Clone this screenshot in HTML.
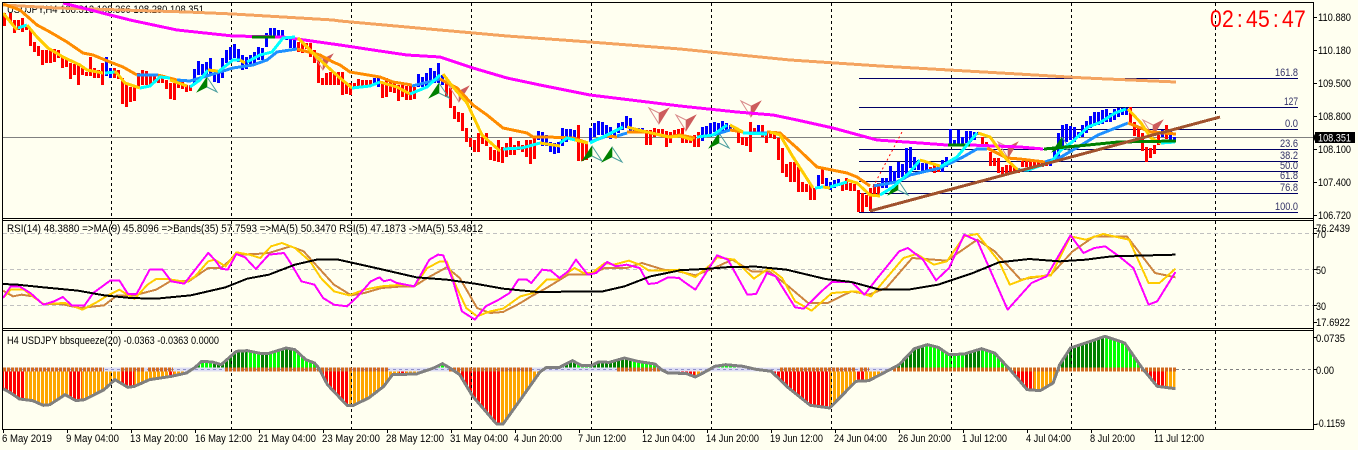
<!DOCTYPE html>
<html>
<head>
<meta charset="utf-8">
<title>USDJPY,H4</title>
<style>
html,body{margin:0;padding:0;background:#FFFFF0;width:1358px;height:450px;overflow:hidden}
svg{display:block}
text{font-family:"Liberation Sans",sans-serif;font-size:11px;fill:#000}
.r,.b{fill:none;stroke-width:3;shape-rendering:crispEdges}
.r{stroke:#F00}.b{stroke:#00F}
.l{fill:none;stroke-width:3;stroke-linejoin:round;stroke-linecap:butt;shape-rendering:crispEdges}
.y{stroke:#FC0}.c{stroke:#0FF}.o{stroke:#FF8C00}.d{stroke:#1E90FF}
.t{fill:none;stroke-width:2;stroke-linejoin:round;vector-effect:non-scaling-stroke;shape-rendering:crispEdges}
.f{fill:#336}
</style>
</head>
<body>
<svg width="1358" height="450" viewBox="0 0 1358 450" xmlns="http://www.w3.org/2000/svg">
<defs>
<clipPath id="h1"><polygon points="7,182 25,195 45,213 75,218 100,232 115,230 150,200 175,218 195,215 240,185 265,155 295,178 310,175 345,155 395,145 430,135 450,118 465,100 490,102 510,110 545,70 570,68 600,76 620,76 660,60 680,65 705,95 725,105 735,120 755,170 800,232 815,232 850,210 885,175 905,140 960,138 1000,120 1020,107 1035,118 1060,140 1090,205 1145,288 1160,288 1200,215 1245,132 1260,118 1290,118 1320,98 1340,112 1365,112 1380,102 1405,103 1440,90 1470,100 1510,108 1525,125 1540,135 1568,135 1568,124 7,124"/></clipPath>
<clipPath id="h2"><polygon points="0,137 20,137 40,147 65,130 85,115 110,110 150,115 180,124 215,130 255,180 305,232 350,240 410,160 440,158 490,124 510,110 545,62 575,50 600,58 625,80 660,78 700,62 730,75 765,124 805,185 835,188 865,165 880,110 905,60 985,25 1030,45 1070,120 1105,175 1147,182 1147,124 0,124"/></clipPath>
<g id="ga"><path d="M0 0-10 15 0 10Z" fill="#008000" stroke="#008000" stroke-width=".6"/><path d="M0 0 10 15 0 10" fill="none" stroke="#4A9E9E" stroke-width="1"/></g>
<g id="sa"><path d="M0 0 10-16 0-11Z" fill="#CD5C5C" stroke="#CD5C5C" stroke-width=".6"/><path d="M0 0-10-16 0-11" fill="none" stroke="#D98A8A" stroke-width="1"/></g>
</defs>

<rect width="1358" height="450" fill="#FFFFF0"/>

<!-- title -->
<text x="7" y="13" textLength="197" lengthAdjust="spacingAndGlyphs">USDJPY,H4  108.313 108.366 108.280 108.351</text>

<!-- vertical grid -->
<path d="M111.5 3V218M231.5 3V218M351.5 3V218M471.5 3V218M591.5 3V218M711.5 3V218M831.5 3V218M951.5 3V218M1071.5 3V218M1215.5 3V218M111.5 221V328M231.5 221V328M351.5 221V328M471.5 221V328M591.5 221V328M711.5 221V328M831.5 221V328M951.5 221V328M1071.5 221V328M1215.5 221V328" stroke="#000" stroke-width="1" stroke-dasharray="3 3" fill="none"/>

<!-- bid line -->
<path d="M3 137.5H1313" stroke="#808080" stroke-width="1"/>

<!-- fib levels -->
<path d="M859 78.5H1298M859 107.5H1298M859 129.5H1298M859 149.5H1298M859 161.5H1298M859 171.5H1298M859 181.5H1298M859 193.5H1298M859 212.5H1298" stroke="#000066" stroke-width="1"/>
<g font-size="10">
<text class="f" x="1275" y="76" textLength="23" lengthAdjust="spacingAndGlyphs">161.8</text>
<text class="f" x="1284" y="105" textLength="14" lengthAdjust="spacingAndGlyphs">127</text>
<text class="f" x="1285" y="127" textLength="13" lengthAdjust="spacingAndGlyphs">0.0</text>
<text class="f" x="1280" y="147" textLength="18" lengthAdjust="spacingAndGlyphs">23.6</text>
<text class="f" x="1280" y="159" textLength="18" lengthAdjust="spacingAndGlyphs">38.2</text>
<text class="f" x="1280" y="169" textLength="18" lengthAdjust="spacingAndGlyphs">50.0</text>
<text class="f" x="1280" y="179" textLength="18" lengthAdjust="spacingAndGlyphs">61.8</text>
<text class="f" x="1280" y="191" textLength="18" lengthAdjust="spacingAndGlyphs">76.8</text>
<text class="f" x="1275" y="210" textLength="23" lengthAdjust="spacingAndGlyphs">100.0</text>
</g>

<!-- bars -->
<path class="r" d="M4.5 13V26M10.5 13V22M14.5 20V33M18.5 20V30M22.5 18V32M26.5 25V30M30.5 30V46M34.5 42V52M38.5 46V56M42.5 50V65M46.5 50V63M50.5 50V63M54.5 49V62M58.5 50V58M62.5 57V68M66.5 58V67M70.5 63V79M74.5 64V75M78.5 65V85M82.5 68V75M86.5 72V76M90.5 57V76M94.5 68V78M98.5 70V78M102.5 63V85"/>
<path class="b" d="M106.5 57V76M110.5 68V78"/>
<path class="r" d="M114.5 68V78M118.5 70V79M122.5 78V104M126.5 83V107M130.5 87V102M134.5 87V101M138.5 73V87M142.5 70V85M146.5 71V85M150.5 75V85M154.5 76V83M158.5 78V83M162.5 75V83M166.5 80V89M170.5 83V99M174.5 83V100M178.5 80V88M182.5 82V89M186.5 85V92M190.5 85V91"/>
<path class="b" d="M194.5 69V85M198.5 61V75M202.5 64V75M206.5 62V75M210.5 58V75M214.5 73V82M218.5 70V83M222.5 58V78M226.5 50V63M230.5 47V60M234.5 44V58M238.5 49V62M242.5 55V70M246.5 57V69M250.5 55V65M254.5 52V65M258.5 47V60M262.5 48V60M266.5 33V47M270.5 28V37M274.5 28V37M278.5 30V37M282.5 30V38M286.5 37V40M290.5 38V48M294.5 38V48"/>
<path class="r" d="M298.5 42V52M302.5 42V53M306.5 43V49M310.5 43V57M314.5 50V63M318.5 60V83M322.5 78V85M326.5 73V85M330.5 72V85M334.5 73V85M338.5 72V85M342.5 72V95M346.5 83V94M350.5 83V95M354.5 83V87M358.5 79V87M362.5 80V87M366.5 80V87M370.5 80V85"/>
<path class="b" d="M374.5 78V84M378.5 78V87"/>
<path class="r" d="M382.5 82V98M386.5 78V97M390.5 82V92M394.5 83V93M398.5 85V101M402.5 85V97M406.5 86V100M410.5 85V100M414.5 87V99"/>
<path class="b" d="M418.5 74V87M422.5 77V87M426.5 73V87M430.5 68V83M434.5 71V83M438.5 63V83M442.5 75V85"/>
<path class="r" d="M446.5 83V97M450.5 88V108M454.5 106V119M458.5 112V122M462.5 113V131M466.5 128V142M470.5 138V147M474.5 140V152M478.5 133V152M482.5 137V144M486.5 133V146M490.5 147V160M494.5 150V161M498.5 140V162M502.5 147V163M506.5 143V157M510.5 137V155M514.5 145V155M518.5 141V150M522.5 145V152M526.5 140V157M530.5 140V164M534.5 138V159"/>
<path class="b" d="M538.5 131V140M542.5 132V146M546.5 135V146M550.5 142V152M554.5 143V154M558.5 142V153M562.5 128V146M566.5 129V142M570.5 129V140M574.5 130V140"/>
<path class="r" d="M578.5 125V161M582.5 140V161M586.5 143V160"/>
<path class="b" d="M590.5 128V142M594.5 123V137M598.5 121V135M602.5 122V135M606.5 125V134M610.5 127V139M614.5 130V138M618.5 123V133M622.5 122V130M626.5 116V128M630.5 118V132M634.5 128V132M638.5 128V132M642.5 128V132"/>
<path class="r" d="M646.5 130V145M650.5 130V145M654.5 128V137M658.5 129V135M662.5 129V135M666.5 131V147M670.5 132V143M674.5 130V137M678.5 129V135M682.5 128V143M686.5 135V143M690.5 136V143M694.5 135V147M698.5 132V147"/>
<path class="b" d="M702.5 127V141M706.5 126V137M710.5 123V135M714.5 122V132M718.5 123V135M722.5 121V133M726.5 123V132M730.5 125V131M734.5 128V132"/>
<path class="r" d="M738.5 132V143M742.5 137V145M746.5 137V146M750.5 122V152M754.5 128V135"/>
<path class="b" d="M758.5 125V135"/>
<path class="r" d="M762.5 125V137M766.5 132V143M770.5 132V138M774.5 133V139M778.5 138V160M782.5 148V173M786.5 164V177M790.5 162V182M794.5 162V182M798.5 167V192M802.5 182V192M806.5 184V192M810.5 185V200M814.5 188V200"/>
<path class="b" d="M818.5 175V188"/>
<path class="r" d="M822.5 169V184"/>
<path class="b" d="M826.5 178V188M830.5 182V190M834.5 180V188M838.5 179V186"/>
<path class="r" d="M842.5 182V191M846.5 178V190M850.5 183V191M854.5 184V191M858.5 190V212M862.5 193V212M866.5 195V207M870.5 188V211M874.5 184V197M878.5 183V195"/>
<path class="b" d="M882.5 178V188M886.5 178V188M890.5 166V182M894.5 171V182M898.5 162V178M902.5 164V177M906.5 148V175M910.5 147V168M914.5 157V170M918.5 160V170M922.5 163V171M926.5 163V170"/>
<path class="r" d="M930.5 167V172M934.5 165V173M938.5 165V172"/>
<path class="b" d="M942.5 160V172M946.5 157V167M950.5 129V144M954.5 140V144M958.5 130V145M962.5 137V145M966.5 131V143M970.5 131V142M974.5 132V140M978.5 132V135"/>
<path class="r" d="M982.5 137V144M986.5 142V147M990.5 152V166M994.5 158V166M998.5 158V173M1002.5 167V175M1006.5 165V173M1010.5 165V172M1014.5 167V172M1018.5 168V173M1022.5 161V167M1026.5 161V167M1030.5 161V167M1034.5 161V167M1038.5 161V167M1042.5 161V167M1046.5 161V166"/>
<path class="b" d="M1050.5 161V166M1054.5 150V162M1058.5 133V159M1062.5 125V147M1066.5 124V142M1070.5 126V140M1074.5 127V142M1078.5 132V138M1082.5 125V137M1086.5 121V133M1090.5 116V128M1094.5 112V126M1098.5 112V125M1102.5 110V124M1106.5 109V122M1110.5 113V122M1114.5 109V120M1118.5 108V117M1122.5 108V115M1126.5 108V115"/>
<path class="r" d="M1130.5 107V123M1134.5 122V136M1138.5 127V137M1142.5 133V151M1146.5 147V162M1150.5 148V158M1154.5 145V154M1158.5 135V145"/>
<path class="b" d="M1162.5 130V137"/>
<path class="r" d="M1166.5 125V139"/>
<path class="b" d="M1170.5 130V140M1174.5 137V142"/>

<!-- arrows -->
<use href="#ga" x="207" y="77"/>
<use href="#ga" x="439" y="83"/>
<use href="#ga" x="592" y="146"/>
<use href="#ga" x="612" y="147"/>
<use href="#ga" x="719" y="133"/>
<use href="#ga" x="898" y="180"/>
<use href="#ga" x="1062" y="137"/>
<use href="#sa" x="323" y="70"/>
<use href="#sa" x="459" y="102"/>
<use href="#sa" x="659" y="124"/>
<use href="#sa" x="686" y="131"/>
<use href="#sa" x="751" y="117"/>
<use href="#sa" x="1008" y="158"/>
<use href="#sa" x="1153" y="136"/>

<!-- long MAs -->
<path class="l" stroke="#F4A460" d="M3 5 57 8 187 12 233 14 333 20 340 21 440 30 507 36 590 42 680 49 790 60 880 66 1018 74 1085 78 1176 82"/>
<path class="l" stroke="#F0F" d="M63 3 130 20 177 30 233 36 283 37 340 45 373 50 407 55 440 57 473 68 507 78 540 85 590 95 680 106 737 112 773 115 797 120 833 128 877 140 920 143 947 145 970 145 1020 147 1043 149"/>
<path class="l" stroke="#008000" d="M252 37H275M948 145H970"/>

<!-- slow MA -->
<path class="l o" d="M3 4 20 10 37 25 50 32 67 42 83 53 93 55 110 62 123 67 137 75"/>
<path class="l d" d="M137 75 158 75"/>
<path class="l o" d="M158 75 177 80"/>
<path class="l d" d="M177 80 190 81 200 78 233 68 253 65 267 60 277 52 297 49"/>
<path class="l o" d="M297 49 320 55 333 62 340 65 350 72 380 77 393 82 412 85"/>
<path class="l d" d="M412 86 440 79"/>
<path class="l o" d="M440 79 457 88 473 105 487 115 503 128 527 133 533 137 547 137 573 138 588 143"/>
<path class="l d" d="M590 142 607 136"/>
<path class="l o" d="M607 136 617 137"/>
<path class="l d" d="M617 136 627 133"/>
<path class="l o" d="M627 132 647 132 668 137 680 135 695 138"/>
<path class="l d" d="M697 137 713 135 730 130"/>
<path class="l o" d="M730 130 743 132"/>
<path class="l d" d="M743 133 767 133"/>
<path class="l o" d="M767 132 780 133 797 148 817 167 847 173 857 177 870 186"/>
<path class="l d" d="M873 186 897 182 910 175 940 168 963 157 977 149 987 149"/>
<path class="l o" d="M987 148 1007 158 1020 159 1045 162"/>
<path class="l d" d="M1045 162 1061 157 1078 147 1098 135 1128 123"/>
<path class="l o" d="M1128 123 1151 132 1176 134"/>

<!-- fast MA -->
<path class="l y" d="M3 13 17 30"/>
<path class="l c" d="M18 28 27 25"/>
<path class="l y" d="M27 25 37 37 48 48 63 57 80 65 87 70 103 73"/>
<path class="l c" d="M105 73 115 72"/>
<path class="l y" d="M115 71 125 83 140 88"/>
<path class="l c" d="M140 88 150 86 160 77 170 78"/>
<path class="l y" d="M170 80 187 86"/>
<path class="l c" d="M190 87 200 80 208 70"/>
<path class="l y" d="M208 70 218 71"/>
<path class="l c" d="M218 72 233 60 240 60"/>
<path class="l y" d="M240 60 245 63"/>
<path class="l c" d="M247 62 260 55 272 52 283 38 295 37"/>
<path class="l y" d="M298 38 320 60 340 78 352 88"/>
<path class="l c" d="M352 88 370 86 380 82"/>
<path class="l y" d="M380 82 397 87 410 94"/>
<path class="l c" d="M410 94 427 87 440 75"/>
<path class="l y" d="M443 74 453 87 467 103 482 135 500 151"/>
<path class="l c" d="M503 149 522 148 540 143"/>
<path class="l y" d="M540 143 560 146"/>
<path class="l c" d="M560 143 567 138 575 140"/>
<path class="l y" d="M575 140 588 143"/>
<path class="l c" d="M590 143 607 135 623 127"/>
<path class="l y" d="M627 127 647 132 670 137 680 136 693 140"/>
<path class="l c" d="M697 137 713 135 727 125"/>
<path class="l y" d="M730 125 743 132"/>
<path class="l c" d="M743 133 767 134"/>
<path class="l y" d="M770 132 780 135 793 157 813 188"/>
<path class="l c" d="M815 188 823 187"/>
<path class="l y" d="M823 187 830 188"/>
<path class="l c" d="M830 187 847 182"/>
<path class="l y" d="M847 180 857 183 870 195 880 196"/>
<path class="l c" d="M880 195 893 187 910 172 920 160"/>
<path class="l y" d="M920 160 940 166"/>
<path class="l c" d="M940 167 957 157 977 133"/>
<path class="l y" d="M978 133 990 137 1007 160 1018 170"/>
<path class="l c" d="M1018 170 1028 170 1051 162 1061 150 1071 143 1088 127 1101 122 1115 113 1126 109"/>
<path class="l y" d="M1128 109 1141 123 1151 138 1161 143"/>
<path class="l c" d="M1161 143 1175 142"/>

<!-- dark green MA, trend lines -->
<path class="l" stroke="#008000" d="M1044 149 1088 145 1118 142 1176 141"/>
<path class="l" stroke="#A0522D" d="M870 211 1220 117"/>
<path d="M873 187 902 132" stroke="#F00" stroke-width="1" stroke-dasharray="2 3" fill="none"/>

<!-- clock -->
<text transform="translate(1210,27) scale(.88,1)" x="0 13.64 30.5 40.9 54.5 71.4 81.8 95.5" y="0" style="font-size:24px;fill:#F00">02:45:47</text>

<!-- RSI panel -->
<path d="M3 233.5H1313M3 269.5H1313M3 305.5H1313" stroke="#C0C0C0" stroke-width="1" stroke-dasharray="4 3" fill="none"/>
<text x="7" y="232" textLength="476" lengthAdjust="spacingAndGlyphs">RSI(14) 48.3880  =&gt;MA(9) 45.8096  =&gt;Bands(35) 57.7593  =&gt;MA(5) 50.3470  RSI(5) 47.1873  -&gt;MA(5) 53.4812</text>
<g transform="translate(0,218) scale(.4337,.3333)">
<path class="t" stroke="#CD853F" d="M7 218 30 235 50 230 75 235 100 258 140 258 185 270 240 262 270 232 310 232 360 215 395 188 435 190 480 150 510 150 545 110 590 108 620 105 670 85 700 100 735 150 770 200 810 232 840 225 880 210 930 205 955 205 985 180 1030 148 1060 180 1100 270 1130 285 1160 282 1200 255 1225 235 1260 210 1310 170 1360 170 1395 150 1445 150 1480 135 1530 155 1568 160"/>
<path class="t" stroke="#FC0" d="M7 240 25 215 55 215 75 235 100 258 150 255 190 275 220 255 245 235 275 215 310 243 340 200 360 183 385 183 430 192 450 175 480 130 495 125 520 145 545 103 575 110 600 120 625 85 650 75 680 90 715 130 740 180 770 220 805 232 840 215 880 205 930 200 955 205 985 150 1015 130 1030 130 1050 200 1075 270 1100 295 1130 280 1160 272 1200 235 1230 225 1260 185 1285 185 1325 150 1345 165 1365 165 1395 135 1415 140 1450 128 1475 140 1495 157 1530 158 1568 155"/>
<path class="t" stroke="#F0F" d="M7 240 25 205 45 205 70 225 100 260 125 250 145 237 165 262 195 262 215 225 255 187 275 187 295 228 315 228 345 155 375 155 395 190 425 197 465 130 480 105 495 125 510 152 525 155 545 108 565 118 590 153 620 110 655 105 670 135 695 190 725 200 745 240 770 260 800 265 825 235 855 190 875 178 885 190 900 185 915 195 955 205 990 125 1010 110 1022 112 1045 190 1065 280 1095 305 1120 265 1150 245 1175 225 1195 185 1215 185 1225 195 1250 155 1270 158 1290 180 1310 160 1328 125 1355 170 1375 165 1400 132 1420 145 1445 140 1475 150 1495 198 1515 195 1540 178 1568 180"/>
<path class="t" stroke="#000" d="M7 198 40 200 100 208 180 218 240 232 300 240 360 242 440 232 520 208 570 182 620 170 680 140 730 125 780 125 860 148 960 178 1030 185 1100 198 1160 212 1240 222 1390 220 1440 205 1500 175 1568 157"/>
</g>
<g transform="translate(678,218) scale(.4337,.3333)">
<path class="t" stroke="#CD853F" d="M0 160 40 172 80 152 125 125 170 160 210 160 250 200 300 255 345 255 400 220 440 230 480 210 540 120 590 125 620 128 690 65 730 100 790 185 860 170 910 100 960 55 1035 55 1100 165 1147 178"/>
<path class="t" stroke="#FC0" d="M0 157 40 177 80 135 90 118 130 125 175 182 210 150 240 180 270 250 308 278 355 225 410 220 445 235 520 120 550 108 590 140 620 130 660 55 690 48 740 130 765 200 810 178 860 172 905 55 940 65 980 48 1040 65 1085 195 1110 195 1147 152"/>
<path class="t" stroke="#F0F" d="M0 178 20 197 40 215 90 112 115 125 160 230 180 228 205 165 225 175 270 268 290 272 335 215 355 192 400 192 430 230 460 180 510 100 530 90 565 125 595 187 625 150 660 50 690 68 760 275 815 195 850 175 905 52 935 105 960 90 985 85 1020 118 1050 150 1085 260 1105 250 1147 162"/>
<path class="t" stroke="#000" d="M0 157 60 153 120 147 180 146 250 155 340 183 400 192 465 215 530 215 600 200 680 165 740 133 810 123 880 130 940 125 1000 115 1147 110"/>
</g>

<!-- squeeze panel -->
<g transform="translate(0,328) scale(.4337,.3333)">
<g clip-path="url(#h1)">
<rect x="0" y="124" width="58" height="200" fill="#F00"/>
<rect x="58" y="124" width="102" height="200" fill="#FFA500"/>
<rect x="160" y="124" width="28" height="200" fill="#F00"/>
<rect x="188" y="124" width="92" height="200" fill="#FFA500"/>
<rect x="280" y="124" width="30" height="200" fill="#F00"/>
<rect x="310" y="124" width="80" height="200" fill="#FFA500"/>
<rect x="390" y="124" width="10" height="200" fill="#F00"/>
<rect x="400" y="124" width="345" height="200" fill="#FFA500"/>
<rect x="745" y="124" width="60" height="200" fill="#F00"/>
<rect x="805" y="124" width="115" height="200" fill="#FFA500"/>
<rect x="920" y="124" width="15" height="200" fill="#F00"/>
<rect x="935" y="124" width="125" height="200" fill="#FFA500"/>
<rect x="1060" y="124" width="95" height="200" fill="#F00"/>
<rect x="1155" y="124" width="375" height="200" fill="#FFA500"/>
<rect x="1530" y="124" width="40" height="200" fill="#F00"/>
<rect x="440" y="0" width="20" height="124" fill="#008000"/>
<rect x="460" y="0" width="30" height="124" fill="#0F0"/>
<rect x="490" y="0" width="80" height="124" fill="#008000"/>
<rect x="570" y="0" width="30" height="124" fill="#0F0"/>
<rect x="600" y="0" width="20" height="124" fill="#008000"/>
<rect x="620" y="0" width="25" height="124" fill="#0F0"/>
<rect x="645" y="0" width="30" height="124" fill="#008000"/>
<rect x="675" y="0" width="60" height="124" fill="#0F0"/>
<rect x="1000" y="0" width="40" height="124" fill="#0F0"/>
<rect x="1295" y="0" width="35" height="124" fill="#008000"/>
<rect x="1330" y="0" width="35" height="124" fill="#0F0"/>
<rect x="1365" y="0" width="90" height="124" fill="#008000"/>
<rect x="1455" y="0" width="60" height="124" fill="#0F0"/>
</g>
</g>
<g transform="translate(678,328) scale(.4337,.3333)">
<g clip-path="url(#h2)">
<rect x="0" y="124" width="40" height="200" fill="#F00"/>
<rect x="40" y="124" width="30" height="200" fill="#FFA500"/>
<rect x="200" y="124" width="150" height="200" fill="#F00"/>
<rect x="350" y="124" width="60" height="200" fill="#FFA500"/>
<rect x="410" y="124" width="20" height="200" fill="#F00"/>
<rect x="430" y="124" width="60" height="200" fill="#FFA500"/>
<rect x="765" y="124" width="55" height="200" fill="#F00"/>
<rect x="820" y="124" width="60" height="200" fill="#FFA500"/>
<rect x="1075" y="124" width="50" height="200" fill="#F00"/>
<rect x="1125" y="124" width="25" height="200" fill="#FFA500"/>
<rect x="85" y="0" width="65" height="124" fill="#0F0"/>
<rect x="505" y="0" width="65" height="124" fill="#008000"/>
<rect x="570" y="0" width="90" height="124" fill="#0F0"/>
<rect x="660" y="0" width="40" height="124" fill="#008000"/>
<rect x="700" y="0" width="60" height="124" fill="#0F0"/>
<rect x="880" y="0" width="105" height="124" fill="#008000"/>
<rect x="985" y="0" width="90" height="124" fill="#0F0"/>
</g>
</g>
<!-- gaps between histogram bars -->
<line x1="4" y1="380" x2="1178" y2="380" stroke="#FFFFF0" stroke-width="98" stroke-dasharray="1 3" shape-rendering="crispEdges"/>

<!-- grid and label above histogram -->
<path d="M111.5 331V429M231.5 331V429M351.5 331V429M471.5 331V429M591.5 331V429M711.5 331V429M831.5 331V429M951.5 331V429M1071.5 331V429M1215.5 331V429" stroke="#000" stroke-width="1" stroke-dasharray="3 3" fill="none"/>
<path d="M1176 369.5H1313" stroke="#808080" stroke-width="1" stroke-dasharray="3 3"/>
<text x="7" y="344" textLength="212" lengthAdjust="spacingAndGlyphs">H4 USDJPY bbsqueeze(20) -0.0363 -0.0363 0.0000</text>

<!-- zero line dots -->
<g transform="translate(0,369.5)" fill="none" shape-rendering="crispEdges">
<path stroke="#DDDDF4" stroke-width="4" d="M3 0H892"/>
<path stroke="#9090C8" stroke-width="1" stroke-dasharray="3 3" d="M3 0H892"/>
<path stroke="#D2691E" stroke-width="4" stroke-dasharray="3 1" d="M3 0H104M121 0H144M148 0H173M225 0H388M449 0H532M617 0H660M780 0H856M860 0H869M893 0H1176"/>
</g>

<!-- envelope -->
<g transform="translate(0,328) scale(.4337,.3333)">
<path class="t" stroke="#808080" style="stroke-width:3" d="M7 182 25 195 45 213 75 218 100 232 115 230 150 200 175 218 195 215 240 185 265 155 295 178 310 175 345 155 395 145 430 135 450 118 465 100 490 102 510 110 545 70 570 68 600 76 620 76 660 60 680 65 705 95 725 105 735 120 755 170 800 232 815 232 850 210 885 175 905 140 960 138 1000 120 1020 107 1035 118 1060 140 1090 205 1145 288 1160 288 1200 215 1245 132 1260 118 1290 118 1320 98 1340 112 1365 112 1380 102 1405 103 1440 90 1470 100 1510 108 1525 125 1540 135 1568 135"/>
</g>
<g transform="translate(678,328) scale(.4337,.3333)">
<path class="t" stroke="#808080" style="stroke-width:3" d="M0 137 20 137 40 147 65 130 85 115 110 110 150 115 180 124 215 130 255 180 305 232 350 240 410 160 440 158 490 124 510 110 545 62 575 50 600 58 625 80 660 78 700 62 730 75 765 124 805 185 835 188 865 165 880 110 905 60 985 25 1030 45 1070 120 1105 175 1147 182"/>
</g>

<!-- frames -->
<path d="M2.5 2.5H1313.5V429.5H2.5ZM2 218.5H1314M2 220.5H1314M2 328.5H1314M2 330.5H1314" fill="none" stroke="#000" stroke-width="1"/>

<!-- price axis ticks -->
<path d="M1313 17.5h4M1313 50.5h4M1313 83.5h4M1313 116.5h4M1313 149.5h4M1313 182.5h4M1313 215.5h4M1313 228.5h4M1313 233.5h4M1313 269.5h4M1313 305.5h4M1313 322.5h4M1313 337.5h4M1313 369.5h4M1313 424.5h4" stroke="#000" stroke-width="1"/>
<text x="1318" y="21" textLength="33" lengthAdjust="spacingAndGlyphs">110.880</text>
<text x="1318" y="54" textLength="33" lengthAdjust="spacingAndGlyphs">110.180</text>
<text x="1318" y="87" textLength="33" lengthAdjust="spacingAndGlyphs">109.500</text>
<text x="1318" y="120" textLength="33" lengthAdjust="spacingAndGlyphs">108.800</text>
<text x="1318" y="153" textLength="33" lengthAdjust="spacingAndGlyphs">108.100</text>
<text x="1318" y="186" textLength="33" lengthAdjust="spacingAndGlyphs">107.400</text>
<text x="1318" y="219" textLength="33" lengthAdjust="spacingAndGlyphs">106.720</text>
<rect x="1315" y="132" width="40" height="11" fill="#000"/>
<path d="M1313 137.5 1316 132V143Z" fill="#000"/>
<text x="1318" y="141.5" textLength="33" lengthAdjust="spacingAndGlyphs" style="fill:#fff">108.351</text>

<text x="1316" y="232" textLength="34" lengthAdjust="spacingAndGlyphs">76.2439</text>
<text x="1316" y="238" textLength="10" lengthAdjust="spacingAndGlyphs">70</text>
<text x="1316" y="274" textLength="10" lengthAdjust="spacingAndGlyphs">50</text>
<text x="1316" y="310" textLength="10" lengthAdjust="spacingAndGlyphs">30</text>
<text x="1316" y="326" textLength="34" lengthAdjust="spacingAndGlyphs">17.6922</text>
<text x="1316" y="342" textLength="29" lengthAdjust="spacingAndGlyphs">0.0735</text>
<text x="1316" y="374" textLength="18" lengthAdjust="spacingAndGlyphs">0.00</text>
<text x="1316" y="427" textLength="29" lengthAdjust="spacingAndGlyphs">-0.1159</text>

<!-- time axis -->
<path d="M3.5 430v3M67.5 430v3M131.5 430v3M195.5 430v3M259.5 430v3M323.5 430v3M387.5 430v3M451.5 430v3M515.5 430v3M579.5 430v3M643.5 430v3M707.5 430v3M771.5 430v3M835.5 430v3M899.5 430v3M963.5 430v3M1027.5 430v3M1091.5 430v3M1155.5 430v3" stroke="#000" stroke-width="1"/>
<text x="2" y="442" textLength="50" lengthAdjust="spacingAndGlyphs">6 May 2019</text>
<text x="66" y="442" textLength="53" lengthAdjust="spacingAndGlyphs">9 May 04:00</text>
<text x="130" y="442" textLength="58" lengthAdjust="spacingAndGlyphs">13 May 20:00</text>
<text x="195" y="442" textLength="57" lengthAdjust="spacingAndGlyphs">16 May 12:00</text>
<text x="258" y="442" textLength="58" lengthAdjust="spacingAndGlyphs">21 May 04:00</text>
<text x="322" y="442" textLength="58" lengthAdjust="spacingAndGlyphs">23 May 20:00</text>
<text x="386" y="442" textLength="58" lengthAdjust="spacingAndGlyphs">28 May 12:00</text>
<text x="450" y="442" textLength="58" lengthAdjust="spacingAndGlyphs">31 May 04:00</text>
<text x="514" y="442" textLength="48" lengthAdjust="spacingAndGlyphs">4 Jun 20:00</text>
<text x="578" y="442" textLength="48" lengthAdjust="spacingAndGlyphs">7 Jun 12:00</text>
<text x="642" y="442" textLength="53" lengthAdjust="spacingAndGlyphs">12 Jun 04:00</text>
<text x="706" y="442" textLength="53" lengthAdjust="spacingAndGlyphs">14 Jun 20:00</text>
<text x="770" y="442" textLength="53" lengthAdjust="spacingAndGlyphs">19 Jun 12:00</text>
<text x="834" y="442" textLength="53" lengthAdjust="spacingAndGlyphs">24 Jun 04:00</text>
<text x="898" y="442" textLength="53" lengthAdjust="spacingAndGlyphs">26 Jun 20:00</text>
<text x="962" y="442" textLength="45" lengthAdjust="spacingAndGlyphs">1 Jul 12:00</text>
<text x="1026" y="442" textLength="45" lengthAdjust="spacingAndGlyphs">4 Jul 04:00</text>
<text x="1090" y="442" textLength="45" lengthAdjust="spacingAndGlyphs">8 Jul 20:00</text>
<text x="1154" y="442" textLength="50" lengthAdjust="spacingAndGlyphs">11 Jul 12:00</text>
</svg>
</body>
</html>
